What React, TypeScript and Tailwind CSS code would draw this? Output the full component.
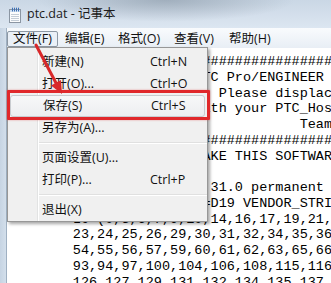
/**
 * 记事本 文件菜单 截图
 */

const menuBar = [
  { label: '文件(F)', w: 'w-[53px]', open: true },
  { label: '编辑(E)', w: 'w-[53px]' },
  { label: '格式(O)', w: 'w-[56px]' },
  { label: '查看(V)', w: 'w-[55px]' },
  { label: '帮助(H)', w: 'w-[55px]' },
];

type Item = { label: string; keys?: string; hot?: boolean } | 'sep';

const fileMenu: Item[] = [
  { label: '新建(N)', keys: 'Ctrl+N' },
  { label: '打开(O)...', keys: 'Ctrl+O' },
  { label: '保存(S)', keys: 'Ctrl+S', hot: true },
  { label: '另存为(A)...' },
  'sep',
  { label: '页面设置(U)...' },
  { label: '打印(P)...', keys: 'Ctrl+P' },
  'sep',
  { label: '退出(X)' },
];

const lines = [
  '#'.repeat(60),
  '#  This license is for PTC Pro/ENGINEER Wildfire 5.0',
  '# INSTRUCTIONS FOR USE:   Please displace 00-00-00-00-00-00',
  '# and the license file with your PTC_HostID.',
  '#' + ' '.repeat(35) + 'Team',
  '#'.repeat(60),
  "#WARNING: PLEASE DON'T MAKE THIS SOFTWARE PUBLIC",
  ' ',
  'INCREMENT PROE_Eng ptc_d 31.0 permanent uncounted \\',
  '        SUPERSEDE ISSUER=D19 VENDOR_STRING="VSVER=2.0',
  '        LO=(0,3,6,7,9,10,14,16,17,19,21,22,\\',
  '        23,24,25,26,29,30,31,32,34,35,36,37,38,\\',
  '        54,55,56,57,59,60,61,62,63,65,66,67,\\',
  '        93,94,97,100,104,106,108,115,116,118,\\',
  '        126,127,129,131,132,134,135,137,\\',
];

function NotepadIcon() {
  return (
    <svg width="16" height="17" viewBox="0 0 16 17">
      <rect x="2.5" y="3.5" width="11" height="13" fill="#fbfcfd" stroke="#8b96a3" />
      <rect x="3" y="4" width="10" height="2" fill="#cfe0f2" />
      {[5, 7, 9, 11].map(x => (
        <rect key={x} x={x} y="1.5" width="1" height="4" rx="0.5" fill="#3d6fb3" />
      ))}
      {[8.5, 10.5, 12.5, 14.5].map(y => (
        <line key={y} x1="4" y1={y} x2="12" y2={y} stroke="#c3ccd6" strokeWidth="1" />
      ))}
    </svg>
  );
}

export default function App() {
  return (
    <div className="relative w-[331px] h-[283px] overflow-hidden bg-white font-['Open_Sans','Noto_Sans_CJK_SC',sans-serif] text-[12.5px] text-[#111]">
      {/* タイトルバー */}
      <div className="h-[28px] flex items-center pl-[7px] bg-[radial-gradient(ellipse_at_50%_0%,rgba(110,125,140,0.45),transparent_55%),linear-gradient(180deg,#cad7e5,#dce6f1)]">
        <NotepadIcon />
        <span className="ml-[4px] text-[#1b1b1b]">ptc.dat - 记事本</span>
      </div>

      <div className="flex h-[255px]">
        <div className="w-[7px] shrink-0 bg-[linear-gradient(90deg,#c6d4e3,#d3dfeb)] border-r border-[#9fb0c2]" />
        <div className="flex-1 min-w-0 overflow-hidden flex flex-col">
          {/* メニューバー */}
          <div className="h-[20px] shrink-0 pt-[3px] flex bg-[linear-gradient(180deg,#f9fbfd,#e8eef5)]">
            {menuBar.map(m => (
              <div
                key={m.label}
                className={`${m.w} shrink-0 h-[16px] flex items-center pl-[5px] ${m.open ? 'border border-[#8d98a4] rounded-[2px] bg-[#eaf0f7] !w-[51px] mr-[2px]' : ''}`}
              >
                {m.label}
              </div>
            ))}
          </div>

          {/* 本文 */}
          <div className="flex-1 pt-[6px] pl-[1px] font-['Liberation_Mono',monospace] text-[13.5px] leading-[15.75px] text-black">
            {lines.map((l, i) => (
              <div key={i} className="whitespace-pre">{l}</div>
            ))}
          </div>
        </div>
      </div>

      {/* ファイルメニュー */}
      <div className="absolute left-[7px] top-[47px] w-[201px] border border-[#979797] bg-[#f0f0f0] pt-[3px] shadow-[2px_2px_3px_rgba(0,0,0,0.35)]">
        <div className="absolute left-[29px] top-0 bottom-0 w-[1px] bg-[#e2e3e3]" />
        <div className="absolute left-[30px] top-0 bottom-0 w-[1px] bg-white" />
        {fileMenu.map((it, i) =>
          it === 'sep' ? (
            <div key={i} className="h-[8px] pt-[3px] pl-[31px]">
              <div className="h-[1px] bg-[#e0e0e0]" />
              <div className="h-[1px] bg-white" />
            </div>
          ) : (
            <div key={i} className="relative h-[22px] px-[2px]">
              <div
                className={`h-full flex items-center pl-[32px] rounded-[3px] ${it.hot ? 'border border-[#c9ccd0] bg-[linear-gradient(180deg,#f7f8f9,#eceef0)]' : ''}`}
              >
                <span className="w-[108px] shrink-0">{it.label}</span>
                {it.keys && <span>{it.keys}</span>}
              </div>
            </div>
          ),
        )}
      </div>

      {/* 赤枠 */}
      <div className="absolute left-[7px] top-[90px] w-[203px] h-[30px] border-[3px] border-[#e0282b] rounded-[1px] shadow-[0_0_2px_rgba(224,40,43,0.5)]" />

      {/* 赤い矢印 */}
      <svg className="absolute left-0 top-0 pointer-events-none" width="331" height="283">
        <line x1="36" y1="45" x2="56" y2="83" stroke="#d8282a" strokeWidth="3" strokeLinecap="round" />
        <polygon points="62,94 61,80 51,85.5" fill="#d8282a" />
      </svg>
    </div>
  );
}
